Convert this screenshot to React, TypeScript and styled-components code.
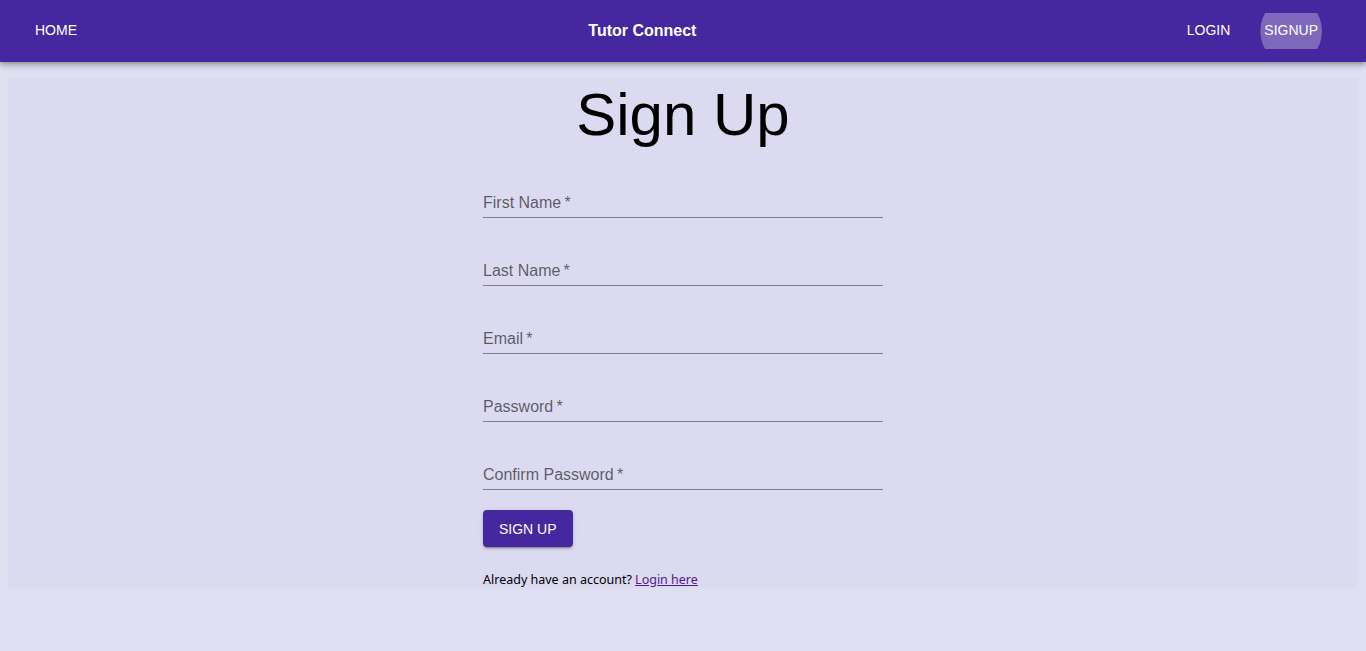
import styled, { createGlobalStyle } from 'styled-components';

const GlobalStyle = createGlobalStyle`
  html, body {
    margin: 0;
    padding: 0;
    background: #e0dff2;
    font-family: 'Liberation Sans', Arial, sans-serif;
  }
`;

export const Header = styled.header`
  height: 62px;
  background: #4527a0;
  color: #fff;
  display: flex;
  align-items: center;
  justify-content: space-between;
  padding: 0 44px 0 24px;
  box-shadow: 0 2px 4px -1px rgba(0, 0, 0, 0.2), 0 4px 5px 0 rgba(0, 0, 0, 0.14),
    0 1px 10px 0 rgba(0, 0, 0, 0.12);
  position: relative;
  z-index: 2;
`;

export const NavButton = styled.a<{ $active?: boolean }>`
  display: inline-flex;
  align-items: center;
  justify-content: center;
  height: 36px;
  padding: 0 ${(p) => (p.$active ? '4px' : '11px')} 2px;
  min-width: ${(p) => (p.$active ? '60px' : 'auto')};
  box-sizing: border-box;
  font-size: 14px;
  text-transform: uppercase;
  color: #fff;
  background: ${(p) => (p.$active ? 'rgba(255, 255, 255, 0.3)' : 'transparent')};
  clip-path: ${(p) => (p.$active ? 'ellipse(50% 34px at 50% 50%)' : 'none')};
  cursor: pointer;
`;

export const Brand = styled.div`
  font-size: 16px;
  font-weight: 700;
  margin-left: 21px;
`;

export const NavGroup = styled.nav`
  display: flex;
  align-items: center;
  gap: 19px;
`;

export const Page = styled.main`
  padding: 16px 8px 0;
`;

export const Panel = styled.section`
  background: #dcdaf0;
  display: flex;
  flex-direction: column;
  align-items: center;
`;

export const Title = styled.h1`
  margin: 1px 0 0;
  font-size: 60px;
  font-weight: 400;
  line-height: 1.2;
  color: #000;
`;

export const Form = styled.form`
  width: 400px;
  margin-top: 19px;
  display: flex;
  flex-direction: column;
  gap: 20px;
`;

export const Field = styled.label`
  position: relative;
  display: block;
  height: 48px;
  border-bottom: 1px solid rgba(0, 0, 0, 0.42);
  box-sizing: border-box;
`;

export const FieldLabel = styled.span`
  position: absolute;
  left: 0;
  top: 21px;
  font-size: 16px;
  line-height: 23px;
  color: rgba(0, 0, 0, 0.6);
`;

export const FieldInput = styled.input`
  position: absolute;
  left: 0;
  right: 0;
  bottom: 0;
  height: 32px;
  border: 0;
  background: transparent;
  outline: none;
  font: inherit;
  font-size: 16px;
`;

export const SubmitButton = styled.button`
  align-self: flex-start;
  height: 37px;
  padding: 0 16px;
  border: 0;
  border-radius: 4px;
  background: #4527a0;
  color: #fff;
  font-family: 'Liberation Sans', Arial, sans-serif;
  font-size: 14px;
  text-transform: uppercase;
  box-shadow: 0 3px 1px -2px rgba(0, 0, 0, 0.2), 0 2px 2px 0 rgba(0, 0, 0, 0.14),
    0 1px 5px 0 rgba(0, 0, 0, 0.12);
  cursor: pointer;
`;

export const Footer = styled.p`
  width: 400px;
  margin: 24px 0 0;
  font-family: 'Noto Sans', 'Open Sans', sans-serif;
  font-size: 12.5px;
  line-height: 17px;
  color: #000;

  a {
    color: #551a8b;
    text-decoration: underline;
  }
`;

const fields = ['First Name', 'Last Name', 'Email', 'Password', 'Confirm Password'];

export default function App() {
  return (
    <>
      <GlobalStyle />
      <Header>
        <NavButton>Home</NavButton>
        <Brand>Tutor Connect</Brand>
        <NavGroup>
          <NavButton>Login</NavButton>
          <NavButton $active>Signup</NavButton>
        </NavGroup>
      </Header>
      <Page>
        <Panel>
          <Title>Sign Up</Title>
          <Form onSubmit={(e) => e.preventDefault()}>
            {fields.map((f) => (
              <Field key={f}>
                <FieldLabel>{f}{'\u2009'}*</FieldLabel>
                <FieldInput type={f.includes('Password') ? 'password' : 'text'} />
              </Field>
            ))}
            <SubmitButton type="submit">Sign Up</SubmitButton>
          </Form>
          <Footer>
            Already have an account? <a href="#">Login here</a>
          </Footer>
        </Panel>
      </Page>
    </>
  );
}
